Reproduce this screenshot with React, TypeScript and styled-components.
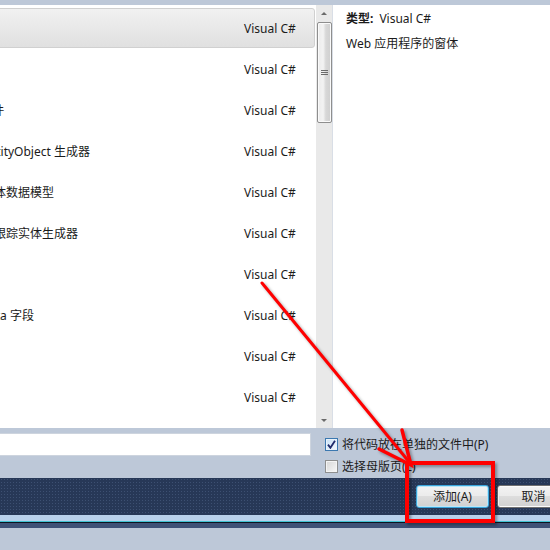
import React from "react";
import styled, { createGlobalStyle, css } from "styled-components";

const GlobalStyle = createGlobalStyle`
  html, body { margin: 0; padding: 0; background: #bdc8d8; }
  body {
    font-family: "Noto Sans", "Noto Sans CJK SC", sans-serif;
    font-size: 12px;
    color: #1b1b1b;
  }
`;

const Frame = styled.div`
  position: relative;
  width: 550px;
  height: 550px;
  overflow: hidden;
  background: #bdc8d8;
  display: flex;
  flex-direction: column;
`;

const Main = styled.div`
  display: flex;
  margin-top: 5px;
  height: 423px;
  flex-shrink: 0;
`;

const ListPane = styled.div`
  width: 316px;
  background: #fff;
  overflow: hidden;
  padding-top: 3px;
  box-sizing: border-box;
`;

const Row = styled.div<{ $selected?: boolean }>`
  display: grid;
  grid-template-columns: 1fr 70px;
  align-items: center;
  height: 40px;
  padding-top: 2px;
  margin: 0 1px 1px -4px;
  box-sizing: border-box;
  border: 1px solid transparent;
  border-radius: 3px;
  line-height: 16px;
  ${(p) =>
    p.$selected &&
    css`
      background: linear-gradient(#f1f1f1, #e0e0e0);
      border-color: #d0d0d0;
    `}
`;

const Name = styled.span`
  margin-left: -69px;
  white-space: nowrap;
`;

const Type = styled.span`
  white-space: nowrap;
`;

const Scrollbar = styled.div`
  width: 17px;
  background: #e9e9e9;
  border-right: 1px solid #d9dee6;
  box-sizing: border-box;
  display: flex;
  flex-direction: column;
  align-items: center;
`;

const ArrowBtn = styled.div<{ $down?: boolean }>`
  height: 17px;
  width: 16px;
  display: flex;
  align-items: center;
  justify-content: center;
  &::before {
    content: "";
    border-left: 3px solid transparent;
    border-right: 3px solid transparent;
    ${(p) =>
      p.$down
        ? css`border-top: 3px solid #6a6a6a; margin-top: 2px;`
        : css`border-bottom: 3px solid #6a6a6a; margin-top: -1px;`}
  }
`;

const Thumb = styled.div`
  width: 15px;
  height: 101px;
  margin-left: 1px;
  box-sizing: border-box;
  border: 1px solid #8e8e8e;
  border-radius: 2px;
  background: linear-gradient(90deg, #ececec, #f3f3f3 40%, #d8d8d8 60%, #cfcfcf);
  box-shadow: inset 0 0 0 1px #fafafa;
  display: flex;
  align-items: center;
  justify-content: center;
`;

const Grip = styled.div`
  width: 7px;
  height: 5px;
  background: repeating-linear-gradient(#6c6c6c 0 1px, transparent 1px 2px);
`;

const Track = styled.div`
  flex: 1;
`;

const DetailPane = styled.div`
  flex: 1;
  background: #fff;
  padding: 6px 0 0 13px;
  line-height: 16px;
`;

const DetailLine = styled.div<{ $gap?: number }>`
  margin-top: ${(p) => p.$gap ?? 0}px;
  white-space: nowrap;
`;

const Label = styled.b`
  font-weight: 700;
  margin-right: 6px;
`;

const OptionsBar = styled.div`
  height: 50px;
  flex-shrink: 0;
  display: flex;
  align-items: flex-start;
  padding-top: 5px;
  box-sizing: border-box;
`;

const NameInput = styled.div`
  width: 313px;
  height: 23px;
  margin-left: -2px;
  box-sizing: border-box;
  background: #fff;
  border: 1px solid #cdd4de;
  flex-shrink: 0;
`;

const Options = styled.div`
  margin-left: 14px;
  padding-top: 5px;
  display: flex;
  flex-direction: column;
  gap: 9px;
`;

const OptionRow = styled.label`
  display: flex;
  align-items: center;
  gap: 4px;
  height: 13px;
  white-space: nowrap;
  line-height: 13px;
`;

const Box = styled.span<{ $checked?: boolean }>`
  width: 13px;
  height: 13px;
  box-sizing: border-box;
  display: flex;
  align-items: center;
  justify-content: center;
  border: 1px solid ${(p) => (p.$checked ? "#3b78b0" : "#8e8f8f")};
  background: ${(p) =>
    p.$checked
      ? "linear-gradient(135deg, #c9e1f6, #f3f8fd)"
      : "linear-gradient(135deg, #d6d6d6, #f8f8f8)"};
  box-shadow: inset 0 0 0 1px ${(p) => (p.$checked ? "#e8f2fb" : "#f4f4f4")};
`;

const ButtonBar = styled.div`
  height: 37px;
  flex-shrink: 0;
  box-sizing: border-box;
  padding: 7px 0 0 416px;
  display: flex;
  gap: 8px;
  background-color: #273857;
  background-image: radial-gradient(circle, rgba(120, 145, 185, 0.28) 0.7px, transparent 1px);
  background-size: 3px 3px;
`;

const Button = styled.div<{ $default?: boolean }>`
  width: 73px;
  height: 23px;
  flex-shrink: 0;
  box-sizing: border-box;
  border-radius: 3px;
  display: flex;
  align-items: center;
  justify-content: center;
  border: 1px solid ${(p) => (p.$default ? "#3aa6dc" : "#707070")};
  background: linear-gradient(#f3f3f3, #ebebeb 50%, #dddddd 50%, #d1d1d1);
  box-shadow: inset 0 0 0 1px ${(p) => (p.$default ? "#b9e6f8" : "#fcfcfc")};
  color: #1b1b1b;
  line-height: 14px;
`;

const Stripe = styled.div<{ $h: number; $c: string }>`
  height: ${(p) => p.$h}px;
  background: ${(p) => p.$c};
  flex-shrink: 0;
`;

const Annotation = styled.svg`
  position: absolute;
  left: 0;
  top: 0;
  pointer-events: none;
  filter: drop-shadow(2px 2px 1.5px rgba(0, 0, 0, 0.35));
`;

const rows: { name: string; selected?: boolean }[] = [
  { name: "Web 窗体", selected: true },
  { name: "母版页" },
  { name: "Web 用户控件" },
  { name: "ADO.NET EntityObject 生成器" },
  { name: "ADO.NET 实体数据模型" },
  { name: "ADO.NET 自跟踪实体生成器" },
  { name: "XML 文件" },
  { name: "Dynamic Data 字段" },
  { name: "Web 服务" },
  { name: "样式表" },
];

export default function App() {
  return (
    <Frame>
      <GlobalStyle />
      <Main>
        <ListPane>
          {rows.map((r, i) => (
            <Row key={i} $selected={r.selected}>
              <Name>{r.name}</Name>
              <Type>Visual C#</Type>
            </Row>
          ))}
        </ListPane>
        <Scrollbar>
          <ArrowBtn />
          <Thumb>
            <Grip />
          </Thumb>
          <Track />
          <ArrowBtn $down />
        </Scrollbar>
        <DetailPane>
          <DetailLine>
            <Label>类型:</Label>Visual C#
          </DetailLine>
          <DetailLine $gap={9}>Web 应用程序的窗体</DetailLine>
        </DetailPane>
      </Main>
      <OptionsBar>
        <NameInput />
        <Options>
          <OptionRow>
            <Box $checked>
              <svg width="9" height="9" viewBox="0 0 9 9">
                <path d="M1 4.6 L3.4 7.8 L8 0.8" fill="none" stroke="#1f2a6b" strokeWidth="1.8" />
              </svg>
            </Box>
            将代码放在单独的文件中(P)
          </OptionRow>
          <OptionRow>
            <Box />
            选择母版页(L)
          </OptionRow>
        </Options>
      </OptionsBar>
      <ButtonBar>
        <Button $default>添加(A)</Button>
        <Button>取消</Button>
      </ButtonBar>
      <Stripe $h={6} $c="#b8d0ea" />
      <Stripe $h={1} $c="#40c3d3" />
      <Stripe $h={1} $c="#0d1320" />
      <Stripe $h={5} $c="#3e5176" />
      <Annotation width="550" height="550" viewBox="0 0 550 550">
        <rect x="407" y="463" width="86" height="58" fill="none" stroke="#ff0000" strokeWidth="4" />
        <line x1="262" y1="283" x2="410" y2="463" stroke="#ff0000" strokeWidth="3" strokeLinecap="round" />
        <polyline
          points="402,430 411,465 379,449"
          fill="none"
          stroke="#ff0000"
          strokeWidth="3.5"
          strokeLinecap="round"
          strokeLinejoin="miter"
        />
      </Annotation>
    </Frame>
  );
}
